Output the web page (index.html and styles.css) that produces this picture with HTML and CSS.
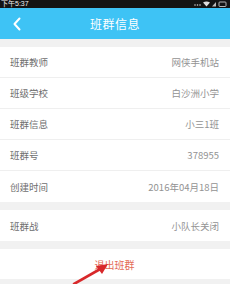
FILE: index.html
```html
<!DOCTYPE html>
<html lang="zh">
<head>
<meta charset="utf-8">
<link rel="stylesheet" href="styles.css">
</head>
<body>
<div class="screen">
  <div class="status">
    <span class="time">下午5:37</span>
    <span class="sicons">
      <svg width="34" height="6" viewBox="0 0 34 6">
        <circle cx="2" cy="4" r="0.8" fill="#ccc"/>
        <circle cx="4.5" cy="4" r="0.8" fill="#ccc"/>
        <circle cx="7" cy="4" r="0.8" fill="#ccc"/>
        <path d="M10 1.5 Q13.5 -0.5 17 1.5 L13.5 5.5 Z" fill="#ddd"/>
        <path d="M19 5.5 L23 1 L23 5.5 Z" fill="#bbb"/>
        <rect x="26" y="1" width="7" height="4.5" rx="0.8" fill="none" stroke="#ddd" stroke-width="0.8"/>
      </svg>
    </span>
  </div>
  <div class="header">
    <svg class="back" width="10" height="14" viewBox="0 0 10 14"><path d="M7.5 1.5 L2.5 7 L7.5 12.5" fill="none" stroke="#fff" stroke-width="2" stroke-linecap="round" stroke-linejoin="round"/></svg>
    <span class="title">班群信息</span>
  </div>
  <div class="group">
    <div class="row"><span class="label">班群教师</span><span class="value">网侠手机站</span></div>
    <div class="row"><span class="label">班级学校</span><span class="value">白沙洲小学</span></div>
    <div class="row"><span class="label">班群信息</span><span class="value">小三1班</span></div>
    <div class="row"><span class="label">班群号</span><span class="value">378955</span></div>
    <div class="row"><span class="label">创建时间</span><span class="value">2016年04月18日</span></div>
  </div>
  <div class="group">
    <div class="row"><span class="label">班群战</span><span class="value">小队长关闭</span></div>
  </div>
  <div class="group">
    <div class="row exit"><span class="exit-text">退出班群</span></div>
  </div>
  <svg class="arrow" width="40" height="24" viewBox="0 0 40 24">
    <path d="M2 22 L30 6" stroke="#d8282a" stroke-width="2.6" stroke-linecap="round"/>
    <path d="M36 2 L24 4 L30 12 Z" fill="#d8282a"/>
  </svg>
</div>
</body>
</html>
```
FILE: styles.css
```css
* { box-sizing: border-box; }
html, body { margin: 0; padding: 0; }
body {
  width: 230px;
  height: 284px;
  overflow: hidden;
  background: #f1f1f1;
  font-family: "Noto Sans CJK SC", "Liberation Sans", sans-serif;
}
.screen {
  position: relative;
  width: 230px;
  height: 284px;
  display: flex;
  flex-direction: column;
}
.status {
  height: 8px;
  background: #141414;
  display: flex;
  align-items: center;
  justify-content: space-between;
  padding: 0 3px 0 1px;
}
.time {
  color: #eee;
  font-size: 7px;
  line-height: 8px;
  font-family: "Liberation Sans", "Noto Sans CJK SC", sans-serif;
}
.sicons { display: flex; align-items: center; }
.header {
  height: 31px;
  background: #3ec3f5;
  display: flex;
  align-items: center;
  justify-content: center;
  position: relative;
}
.back {
  position: absolute;
  left: 12px;
  top: 9px;
}
.title {
  color: #fff;
  font-size: 12px;
  letter-spacing: 0.5px;
}
.group {
  background: #fff;
  margin-top: 8px;
}
.group:first-of-type { margin-top: 9px; }
.row {
  height: 31px;
  display: flex;
  align-items: center;
  justify-content: space-between;
  padding: 0 11px 0 10px;
  border-bottom: 1px solid #efefef;
  font-size: 9.5px;
}
.row:last-child { border-bottom: none; }
.label { color: #6e6e6e; }
.value { color: #939393; }
.exit { justify-content: center; height: 30px; }
.exit-text { color: #e46a56; font-size: 10px; }
.arrow {
  position: absolute;
  left: 72px;
  top: 262px;
}
```
